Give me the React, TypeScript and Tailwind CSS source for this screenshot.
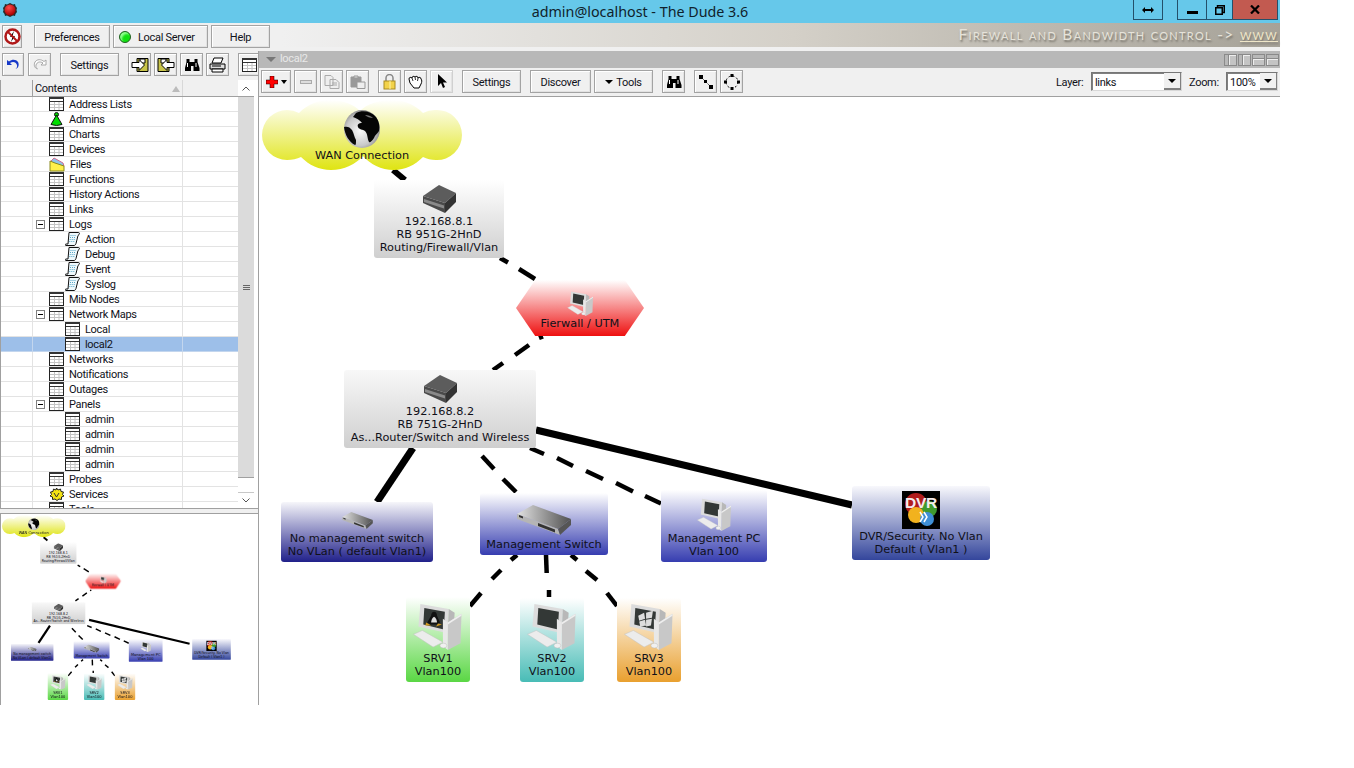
import { Fragment, type ReactNode } from 'react';

// ── Small toolbar glyphs ──────────────────────────────────────────────────────
function TableIcon({ className = '' }: { className?: string }) {
  return (
    <svg width="15" height="14" viewBox="0 0 15 14" className={`shrink-0 ${className}`}>
      <rect x="0.5" y="0.5" width="14" height="13" fill="#fff" stroke="#222" />
      <rect x="0" y="0" width="15" height="2" fill="#333" />
      <path d="M1 4.500h13" stroke="#333" />
      <path d="M1 7.500h13M1 10.500h13M5.500 5v8M10 5v8" stroke="#c4c4c4" />
    </svg>
  );
}

function ScrollIcon() {
  return (
    <svg width="15" height="14" viewBox="0 0 15 14" className="shrink-0">
      <path d="M4 .5h9.500c1 0 1.200 1 .6 2l-1.100 1-2 8c-.3 1-1 2-2 2H1c-1 0-1-1.500 0-1.500h2z" fill="#eef8fc" stroke="#111" />
      <path d="M5.500 3.500h6M5 5.500h6M4.700 7.500h6M4.300 9.500h5" stroke="#5aa8c8" strokeDasharray="1 1" />
    </svg>
  );
}

function ConeIcon() {
  return (
    <svg width="15" height="14" viewBox="0 0 15 14" className="shrink-0">
      <circle cx="7.500" cy="2.500" r="2" fill="#0c0" stroke="#111" />
      <path d="M7.500 3 L13 12.500 Q7.500 14.500 2 12.500z" fill="#0d0" stroke="#111" />
    </svg>
  );
}

function FolderIcon() {
  return (
    <svg width="16" height="15" viewBox="0 0 16 15" className="shrink-0">
      <path d="M1 5 L5 1 L14 6 L15 9 L6 8z" fill="#8fc4e8" stroke="#d06a90" />
      <path d="M1 4 L6 6 L15 9 V14 H1z" fill="#fff04a" stroke="#8a8a20" />
    </svg>
  );
}

function StarIcon() {
  return (
    <svg width="15" height="13" viewBox="0 0 15 13" className="shrink-0">
      <path d="M7.500 0l1.500 2 2.500-1 .5 2.500 2.500.5-1 2.500 1.500 1.500-2.500 1 0 2.500-2.500-.5-2 1.500-2-1.500-2.500.5 0-2.500-2.500-1 1.500-1.500-1-2.500 2.500-.5.500-2.500 2.500 1z" fill="#f5e414" stroke="#222" />
      <path d="M5 5l2.500 4L10 5" fill="none" stroke="#333" />
    </svg>
  );
}

function Binoculars() {
  return (
    <svg width="16" height="14" viewBox="0 0 16 14">
      <path d="M2.500 1h3v3h5V1h3v3l2 6v3h-6V8H7v5H1v-3l1.500-6z" fill="#000" />
      <path d="M3.500 5v4M12 5v4" stroke="#fff" />
    </svg>
  );
}

function Printer() {
  return (
    <svg width="17" height="16" viewBox="0 0 17 16">
      <path d="M5 1h9l-2 5H3z" fill="#fff" stroke="#000" />
      <path d="M1 7h15v5H1z" fill="#ddd" stroke="#000" />
      <path d="M3 12h11v3H3z" fill="#fff" stroke="#000" />
      <path d="M3 9h9" stroke="#000" />
    </svg>
  );
}

function ArrowDoc({ flip = false }: { flip?: boolean }) {
  return (
    <svg width="18" height="14" viewBox="0 0 18 14" className={flip ? '-scale-x-100' : ''}>
      <path d="M6 0.500h11v13H6z" fill="#c8c44a" stroke="#000" />
      <path d="M9 1v4h5V1z" fill="#fff" stroke="#000" />
      <path d="M1 4.500h7V1.500l5.500 5.500L8 12.500V9.500H1z" fill="#fff" stroke="#000" />
    </svg>
  );
}

function Btn({ className = '', children }: { className?: string; children?: ReactNode }) {
  return (
    <div className={`flex h-[23px] shrink-0 items-center justify-center border border-[#a3a3a3] bg-[#f0f0f0] shadow-[inset_1px_1px_0_#fff,inset_-1px_-1px_0_#e2e2e2] ${className}`}>
      {children}
    </div>
  );
}

function SplitIcon({ vertical }: { vertical: boolean }) {
  return (
    <div className={`flex h-[12px] w-[13px] gap-px border border-[#8a8a8a] bg-[#8a8a8a] ${vertical ? 'flex-row' : 'flex-col'}`}>
      <div className={`${vertical ? 'w-[3px]' : 'h-[3px]'} bg-[#b8b8b8]`} />
      <div className="flex-1 bg-[#c4c4c4] shadow-[inset_1px_1px_0_#eee]" />
    </div>
  );
}

function Dropdown({ value, className }: { value: string; className: string }) {
  return (
    <div className={`flex h-[19px] items-stretch border border-[#767676] border-b-[#d8d8d8] border-r-[#d8d8d8] bg-white shadow-[inset_1px_1px_0_#808080] ${className}`}>
      <span className="flex-1 pl-[3px] leading-[19px]">{value}</span>
      <div className="flex w-[17px] items-center justify-center border-b-2 border-r border-[#808080] bg-[#f0f0f0]">
        <div className="h-0 w-0 border-x-[4px] border-t-[4px] border-x-transparent border-t-black" />
      </div>
    </div>
  );
}

// ── Tree ──────────────────────────────────────────────────────────────────────
type Row = { label: string; level: 1 | 2; icon?: 'cone' | 'folder' | 'scroll' | 'star'; open?: boolean; selected?: boolean };

const ROWS: Row[] = [
  { label: 'Address Lists', level: 1 },
  { label: 'Admins', level: 1, icon: 'cone' },
  { label: 'Charts', level: 1 },
  { label: 'Devices', level: 1 },
  { label: 'Files', level: 1, icon: 'folder' },
  { label: 'Functions', level: 1 },
  { label: 'History Actions', level: 1 },
  { label: 'Links', level: 1 },
  { label: 'Logs', level: 1, open: true },
  { label: 'Action', level: 2, icon: 'scroll' },
  { label: 'Debug', level: 2, icon: 'scroll' },
  { label: 'Event', level: 2, icon: 'scroll' },
  { label: 'Syslog', level: 2, icon: 'scroll' },
  { label: 'Mib Nodes', level: 1 },
  { label: 'Network Maps', level: 1, open: true },
  { label: 'Local', level: 2 },
  { label: 'local2', level: 2, selected: true },
  { label: 'Networks', level: 1 },
  { label: 'Notifications', level: 1 },
  { label: 'Outages', level: 1 },
  { label: 'Panels', level: 1, open: true },
  { label: 'admin', level: 2 },
  { label: 'admin', level: 2 },
  { label: 'admin', level: 2 },
  { label: 'admin', level: 2 },
  { label: 'Probes', level: 1 },
  { label: 'Services', level: 1, icon: 'star' },
  { label: 'Tools', level: 1 },
];

function TreeIcon({ icon }: { icon?: Row['icon'] }) {
  if (icon === 'cone') return <ConeIcon />;
  if (icon === 'folder') return <FolderIcon />;
  if (icon === 'scroll') return <ScrollIcon />;
  if (icon === 'star') return <StarIcon />;
  return <TableIcon />;
}

function TreeRow({ row }: { row: Row }) {
  const line = row.selected ? 'border-[#c3d6ee] bg-[#9dbfe9]' : 'border-[#e3e3e3]';
  return (
    <div className={`flex h-[15px] shrink-0 border-b ${line}`}>
      <div className={`w-[32px] border-r ${line}`} />
      <div className={`flex w-[150px] items-center border-r ${line}`}>
        <div className={`flex shrink-0 items-center ${row.level === 1 ? 'w-[16px]' : 'w-[32px]'}`}>
          {row.open && (
            <div className="ml-[3px] flex h-[9px] w-[9px] items-center justify-center border border-[#808080] bg-white">
              <div className="h-px w-[5px] bg-black" />
            </div>
          )}
        </div>
        <TreeIcon icon={row.icon} />
        <span className="ml-[5px] whitespace-nowrap pt-[2px] leading-[14px] text-[#10121a]">{row.label}</span>
      </div>
    </div>
  );
}

// ── Map pictures ──────────────────────────────────────────────────────────────
function RouterBox() {
  return (
    <svg width="33" height="28" viewBox="0 0 33 28" className="shrink-0">
      <path d="M0 11L16 0l17 8-11 10z" fill="#5c5c5c" />
      <path d="M0 11l22 7v10L0 18z" fill="#4a4a4a" />
      <path d="M1 14l20 6.500v3L1 17z" fill="#8a8a8a" />
      <path d="M22 18l11-10v9L22 28z" fill="#333" />
    </svg>
  );
}

function Rack({ className }: { className: string }) {
  return (
    <svg viewBox="0 0 54 30" className={`shrink-0 ${className}`}>
      <defs>
        <linearGradient id="rackTop" x1="0" x2="1" y1="0" y2="0">
          <stop offset="0" stopColor="#e2e2e2" />
          <stop offset="1" stopColor="#505050" />
        </linearGradient>
      </defs>
      <path d="M0 9L16 0l38 14-13 10z" fill="url(#rackTop)" />
      <path d="M0 9l41 15 2 6L0 14z" fill="#b5b5b5" />
      <path d="M21 18l17 6.500v3L21 21zM2 10l4 1.500v2L2 12z" fill="#333" />
      <path d="M41 24l13-10v6L43 30z" fill="#555" />
    </svg>
  );
}

function Computer({ className, screen }: { className: string; screen?: 'linux' | 'windows' }) {
  return (
    <svg viewBox="0 0 50 48" className={`shrink-0 ${className}`}>
      <path d="M7 1l29 5-1 25L5 24z" fill="#dcdcdc" />
      <path d="M36 6l6 4-1 16-6 5z" fill="#b8b8b8" />
      <path d="M11 5l21 4-1 18-21-5z" fill="#333836" />
      {screen === 'linux' && (
        <Fragment>
          <path d="M21 9c2 0 3 2 3 4l3 7-3 2h-7l-3-2 4-7c0-2 1-4 3-4z" fill="#111" />
          <path d="M21 14c2 1 3 4 3 6h-6c0-2 1-5 3-6z" fill="#ddd" />
          <path d="M13 20l5 3h-6zM25 21l4 1-6 2z" fill="#d39a1f" />
        </Fragment>
      )}
      {screen === 'windows' && (
        <path d="M14 13l6-3 1 6-6 2zM22 10l7-2-1 7-6 1zM15 19l6-2 1 6-6 1zM22 17l6-1-1 7-5 1z" fill="#ddd" />
      )}
      <path d="M35 20l14-9-1 30-13 7z" fill="#c8c8c8" />
      <path d="M35 20l14-9 0 2-14 9z" fill="#eee" />
      <path d="M30 16l5 4v28l-5-4z" fill="#e8e8e8" />
      <path d="M0 32l9-4 21 12-10 5z" fill="#ececec" stroke="#c4c4c4" strokeWidth=".5" />
      <ellipse cx="30.500" cy="43.500" rx="3.500" ry="2.500" fill="#f0f0f0" stroke="#bbb" strokeWidth=".5" />
    </svg>
  );
}

function Globe() {
  return (
    <svg width="36" height="38" viewBox="0 0 36 38" className="shrink-0">
      <defs>
        <radialGradient id="globeShade" cx="0.450" cy="0.550" r="0.650">
          <stop offset="0" stopColor="#fafafa" />
          <stop offset="0.600" stopColor="#c8c8c8" />
          <stop offset="1" stopColor="#6a6a6a" />
        </radialGradient>
      </defs>
      <ellipse cx="18" cy="19" rx="18" ry="19" fill="url(#globeShade)" />
      <path d="M12 3C18 0 27 1 32 7c3 4 4 9 3 14-2 3-4 4-5 7-2 3-4 5-5 4-2-4-1-8-4-11-2-2-6-1-7-4-1-3 1-4 4-4-2-3-6-5-9-6z" fill="#050505" />
      <path d="M21 5c3 0 6 1 8 3-3 0-6-1-8-3z" fill="#777" />
      <path d="M0 17c3-1 6 0 8 3 2 3 2 7 4 10 0 3 0 5-1 5C5 32 1 25 0 17z" fill="#0a0a0a" />
    </svg>
  );
}

function Cloud() {
  return (
    <svg width="200" height="70" viewBox="0 0 200 70" className="absolute left-0 top-0">
      <defs>
        <linearGradient id="cloudFill" gradientUnits="userSpaceOnUse" x1="0" x2="0" y1="0" y2="70">
          <stop offset="0" stopColor="#ffffff" />
          <stop offset="1" stopColor="#dfe412" />
        </linearGradient>
      </defs>
      <path
        d="M25 10a25 25 0 0 1 12 3C46 4 56 0 68 0c13 0 23 4 30 11C105 4 116 0 130 0c12 0 22 4 31 13a25 25 0 0 1 13-3 25 25 0 0 1 26 25 25 25 0 0 1-26 25c-5 0-9-1-13-3-8 8-18 13-29 13-13 0-24-6-31-14-7 8-19 14-32 14-12 0-22-5-30-13-4 2-9 3-14 3A25 25 0 0 1 0 35a25 25 0 0 1 25-25z"
        fill="url(#cloudFill)"
      />
    </svg>
  );
}

function DvrLogo() {
  return (
    <svg width="38" height="38" viewBox="0 0 38 38" className="shrink-0">
      <rect width="38" height="38" fill="#000" />
      <circle cx="14" cy="13" r="11" fill="#b11c1c" />
      <circle cx="27" cy="18" r="8" fill="#3f9a2e" />
      <circle cx="14" cy="24" r="8" fill="#f2b21e" />
      <circle cx="25" cy="28" r="7" fill="#3f8fd6" />
      <text x="19" y="17" textAnchor="middle" fontFamily="Liberation Sans, sans-serif" fontWeight="700" fontSize="15.500" fill="#f4ecec">DVR</text>
      <path d="M18 21l3 5-3 5M22 21l3 5-3 5" fill="none" stroke="#fff" strokeWidth="1.500" />
    </svg>
  );
}

// Link pieces in screen coordinates, only the parts that are not hidden by a node
const THICK = [
  [393, 170, 405, 180, 6],
  [413, 448, 377, 502, 7],
  [536, 430, 852, 505, 7],
];
const DASHES = [
  [500, 258, 508, 262.500], [519, 269, 535, 279], [539, 338, 543, 336.500],
  [515, 355, 529, 345], [493, 370, 503, 363],
  [482, 456, 494, 469], [503, 479, 516, 492],
  [530, 448, 544, 454], [557, 458, 573, 466], [586, 471, 603, 479], [616, 483, 633, 491.500], [645, 496, 661, 503.500],
  [511, 560, 517, 555], [492, 579, 501, 570], [470, 606, 481, 593],
  [546, 555, 546.700, 573], [549, 590, 549, 597],
  [571, 555, 577, 560], [586, 571, 597, 580], [607, 593, 617, 606],
];

function Label({ lines }: { lines: string[] }) {
  return (
    <div className="text-center font-['DejaVu_Sans',sans-serif] text-[11.300px] leading-[13px] tracking-normal whitespace-nowrap text-[#101018]">
      {lines.map((l) => <div key={l}>{l}</div>)}
    </div>
  );
}

const nodeBase = 'absolute flex flex-col items-center justify-end rounded-[3px] pb-[4px]';

function NetworkMap({ mini = false }: { mini?: boolean }) {
  // the overview draws its boxes a little tighter than the map scale
  const tight = mini ? 'scale-[0.88]' : '';
  return (
    <div className="relative h-[608px] w-[1021px]">
      <svg viewBox="259 97 1021 608" className="absolute inset-0 h-full w-full">
        {THICK.map(([a, b, c, d, w]) => (
          <line key={`${a}-${b}`} x1={a} y1={b} x2={c} y2={d} stroke="#000" strokeWidth={w} />
        ))}
        {DASHES.map(([a, b, c, d]) => (
          <line key={`${a}-${b}`} x1={a} y1={b} x2={c} y2={d} stroke="#000" strokeWidth={4.500} />
        ))}
      </svg>

      <div className="absolute left-[3px] top-[3px] h-[70px] w-[200px]">
        <Cloud />
        <div className="relative flex flex-col items-center pt-[10px]">
          <div className="mb-[1px]"><Globe /></div>
          <Label lines={['WAN Connection']} />
        </div>
      </div>

      <div className={`${nodeBase} ${tight} left-[115px] top-[83px] h-[78px] w-[130px] bg-linear-to-b/srgb from-white to-[#cfcfcf]`}>
        <div className="mb-[2px]"><RouterBox /></div>
        <Label lines={['192.168.8.1', 'RB 951G-2HnD', 'Routing/Firewall/Vlan']} />
      </div>

      <div className={`${nodeBase} ${tight} left-[257px] top-[183px] h-[56px] w-[128px] rounded-none bg-linear-to-b/srgb from-white to-[#ee1010] [clip-path:polygon(0_50%,15%_0,85%_0,100%_50%,85%_100%,15%_100%)]`}>
        <Computer className="mb-[1px] h-[25px] w-[27px]" />
        <div className="pb-[2px]"><Label lines={['Fierwall / UTM']} /></div>
      </div>

      <div className={`${nodeBase} ${tight} left-[85px] top-[273px] h-[78px] w-[192px] bg-linear-to-b/srgb from-[#f8f8f8] to-[#cfcfcf]`}>
        <div className="mb-[2px]"><RouterBox /></div>
        <Label lines={['192.168.8.2', 'RB 751G-2HnD', 'As...Router/Switch and Wireless']} />
      </div>

      <div className={`${nodeBase} ${tight} left-[22px] top-[405px] h-[60px] w-[152px] bg-linear-to-b/srgb from-[#f6f6fa] to-[#20208a]`}>
        <Rack className="mb-[3px] h-[17px] w-[31px]" />
        <Label lines={['No management switch', 'No VLan ( default Vlan1)']} />
      </div>

      <div className={`${nodeBase} ${tight} left-[221px] top-[396px] h-[62px] w-[128px] bg-linear-to-b/srgb from-white to-[#363db0]`}>
        <Rack className="mb-[3px] h-[30px] w-[54px]" />
        <Label lines={['Management Switch']} />
      </div>

      <div className={`${nodeBase} left-[402px] top-[393px] h-[72px] w-[106px] bg-linear-to-b/srgb from-white to-[#363db0]`}>
        <Computer className="mb-[1px] h-[33px] w-[35px]" />
        <Label lines={['Management PC', 'Vlan 100']} />
      </div>

      <div className={`${nodeBase} ${tight} left-[593px] top-[389px] h-[74px] w-[138px] bg-linear-to-b/srgb from-[#f8f8fc] to-[#34469c]`}>
        <div className="mb-[1px]"><DvrLogo /></div>
        <Label lines={['DVR/Security. No Vlan', 'Default ( Vlan1 )']} />
      </div>

      <div className={`${nodeBase} left-[147px] top-[500px] h-[85px] w-[64px] bg-linear-to-b/srgb from-white to-[#5ad744]`}>
        <Computer className="mb-[2px] h-[47px] w-[50px]" screen="linux" />
        <Label lines={['SRV1', 'Vlan100']} />
      </div>

      <div className={`${nodeBase} left-[261px] top-[501px] h-[84px] w-[64px] bg-linear-to-b/srgb from-white to-[#48bcb6]`}>
        <Computer className="mb-[2px] h-[47px] w-[50px]" />
        <Label lines={['SRV2', 'Vlan100']} />
      </div>

      <div className={`${nodeBase} left-[358px] top-[501px] h-[84px] w-[64px] bg-linear-to-b/srgb from-white to-[#e9a02f]`}>
        <Computer className="mb-[2px] h-[47px] w-[50px]" screen="windows" />
        <Label lines={['SRV3', 'Vlan100']} />
      </div>
    </div>
  );
}

// ── Window ────────────────────────────────────────────────────────────────────
export default function App() {
  return (
    <div className="h-[768px] w-[1354px] overflow-hidden bg-white font-['Roboto',sans-serif] text-[11px] tracking-[-0.3px] text-[#10121a]">
      <div className="flex h-[705px] w-[1280px] flex-col bg-[#f0f0f0]">
        {/* Title bar */}
        <div className="relative flex h-[23px] shrink-0 items-center justify-center bg-[#66c8ea]">
          <svg width="16" height="16" viewBox="0 0 16 16" className="absolute left-[2px] top-[2px]">
            <defs>
              <radialGradient id="orb" cx="0.400" cy="0.300" r="0.700">
                <stop offset="0" stopColor="#ff4a4a" />
                <stop offset="1" stopColor="#a80000" />
              </radialGradient>
            </defs>
            <path d="M3 2l2 .5L8 1l3 1.500 2-.5.500 2L15 6l-.5 2 .5 2-1.500 2-.5 2-2-.5L8 15l-3-1.500-2 .5-.5-2L1 10l.5-2L1 6l1.500-2z" fill="#2a2a2a" />
            <circle cx="8" cy="8" r="5.500" fill="url(#orb)" />
          </svg>
          <span className="font-['Noto_Sans',sans-serif] text-[14.300px] tracking-normal text-[#10222c]">admin@localhost - The Dude 3.6</span>
          <div className="absolute right-[2px] top-0 flex h-[20px] items-stretch">
            <div className="mr-[14px] flex w-[30px] items-center justify-center border border-t-0 border-[#24506a] text-[#000]">
              <svg width="12" height="8" viewBox="0 0 12 8"><path d="M0 4l3-3v2h6V1l3 3-3 3V5H3v2z" fill="#000" /></svg>
            </div>
            <div className="flex w-[29px] items-end justify-center border border-t-0 border-r-0 border-[#24506a] pb-[5px]">
              <div className="h-[3px] w-[11px] bg-black" />
            </div>
            <div className="flex w-[26px] items-center justify-center border border-t-0 border-r-0 border-[#24506a]">
              <svg width="10" height="10" viewBox="0 0 10 10"><path d="M2.500 2.500V.75h6.750v6.750H7.500M.75 2.750h6.500v6.500H.75z" fill="none" stroke="#000" strokeWidth="1.500" /></svg>
            </div>
            <div className="flex w-[46px] items-center justify-center border border-t-0 border-[#24506a] bg-[#c25a50]">
              <svg width="10" height="9" viewBox="0 0 10 9"><path d="M1 .5l8 8M9 .5l-8 8" stroke="#000" strokeWidth="2.200" /></svg>
            </div>
          </div>
        </div>

        {/* Main buttons and banner */}
        <div className="flex h-[24px] shrink-0 items-start justify-between bg-linear-to-r/srgb from-[#f0f0f0] from-[22%] via-[#d4d0c8] via-[62%] to-[#a6a298] pt-[2px]">
          <div className="flex">
            <Btn className="ml-[2px] w-[20px]">
              <svg width="17" height="17" viewBox="0 0 17 17">
                <circle cx="8.500" cy="8.500" r="7" fill="#fff" stroke="#b01818" strokeWidth="2.500" />
                <path d="M10 3L6 9h2.500L7 14l4-6H8.500z" fill="#000" />
                <path d="M3.500 3.500l10 10" stroke="#b01818" strokeWidth="2" />
              </svg>
            </Btn>
            <Btn className="ml-[12px] w-[76px] pt-[3px]">Preferences</Btn>
            <Btn className="ml-[3px] w-[95px] justify-start pl-[5px]">
              <span className="h-[12px] w-[12px] rounded-full border border-[#246024] bg-[#10e010] shadow-[inset_2px_2px_2px_#8fff8f]" />
              <span className="ml-[7px] pt-[3px]">Local Server</span>
            </Btn>
            <Btn className="ml-[3px] w-[59px] pt-[3px]">Help</Btn>
          </div>
          <div className="-mt-[1px] whitespace-nowrap pr-[2px] font-['Lato',sans-serif] text-[15.500px] leading-[20px] tracking-[1.300px] text-[#e6e3da] [font-variant-caps:small-caps] [text-shadow:1px_2px_2px_#77736a]">
            Firewall and Bandwidth control -&gt; <span className="underline text-[#efe6c8]">www</span>
          </div>
        </div>

        <div className="flex min-h-0 flex-1 pt-[4px]">
          {/* Left side */}
          <div className="flex w-[258px] shrink-0 flex-col">
            <div className="flex h-[29px] shrink-0 items-start overflow-hidden pt-[2px]">
              <Btn className="ml-[2px] w-[22px]">
                <svg width="14" height="12" viewBox="0 0 14 12"><path d="M1 1v5h5L4 4c3-2 6-1 7 2 .5 2-.5 3-1.500 4 3-1 4-4 2.500-7C10 0 6 0 3 2.500z" fill="#1638c8" /></svg>
              </Btn>
              <Btn className="ml-[4px] w-[23px]">
                <svg width="14" height="12" viewBox="0 0 14 12" className="-scale-x-100"><path d="M1 1v5h5L4 4c3-2 6-1 7 2 .5 2-.5 3-1.500 4 3-1 4-4 2.500-7C10 0 6 0 3 2.500z" fill="#fff" stroke="#a8a8a8" /></svg>
              </Btn>
              <Btn className="ml-[9px] w-[59px] pt-[3px]">Settings</Btn>
              <Btn className="ml-[9px] w-[23px]"><ArrowDoc /></Btn>
              <Btn className="ml-[3px] w-[23px]"><ArrowDoc flip /></Btn>
              <Btn className="ml-[3px] w-[23px]"><Binoculars /></Btn>
              <Btn className="ml-[3px] w-[23px]"><Printer /></Btn>
              <Btn className="ml-[9px] w-[23px]"><TableIcon /></Btn>
            </div>

            {/* Tree */}
            <div className="flex h-[429px] shrink-0 overflow-hidden border-b border-l border-[#a0a0a0] bg-white">
              <div className="flex w-[237px] shrink-0 flex-col overflow-hidden">
                <div className="flex h-[17px] shrink-0 border-b border-[#a0a0a0] bg-[#f0f0f0]">
                  <div className="w-[32px] border-r border-[#a0a0a0]" />
                  <div className="flex w-[150px] items-center justify-between border-r border-[#d8d8d8] pl-[2px] pr-[2px] pt-[2px] leading-[14px]">
                    Contents
                    <div className="h-0 w-0 border-x-[4px] border-b-[6px] border-x-transparent border-b-[#bcbcbc]" />
                  </div>
                </div>
                {ROWS.map((row, i) => <TreeRow key={`${row.label}${i}`} row={row} />)}
              </div>
              <div className="flex w-[16px] shrink-0 flex-col bg-white">
                <div className="flex h-[17px] shrink-0 items-center justify-center border-b border-[#a0a0a0]">
                  <svg width="8" height="5" viewBox="0 0 8 5"><path d="M.5 4.500L4 1l3.500 3.500" fill="none" stroke="#555" /></svg>
                </div>
                <div className="flex h-[381px] shrink-0 flex-col items-center justify-center gap-px border-b border-[#a0a0a0] bg-[#dbdbdb]">
                  <div className="h-px w-[7px] bg-[#666]" />
                  <div className="h-px w-[7px] bg-[#666]" />
                  <div className="h-px w-[7px] bg-[#666]" />
                </div>
                <div className="flex-1" />
                <div className="flex h-[16px] shrink-0 items-center justify-center border-t border-[#c8c8c8]">
                  <svg width="8" height="5" viewBox="0 0 8 5"><path d="M.5.500L4 4 7.500.500" fill="none" stroke="#555" /></svg>
                </div>
              </div>
            </div>

            {/* Overview of the map */}
            <div className="mt-[4px] min-h-0 flex-1 overflow-hidden border-l border-t border-[#a0a0a0] bg-white">
              <div className="origin-top-left scale-[0.318] blur-[0.700px]">
                <NetworkMap mini />
              </div>
            </div>
          </div>

          {/* Map window */}
          <div className="flex min-w-0 flex-1 flex-col border-l border-[#a0a0a0]">
            <div className="flex h-[17px] shrink-0 items-center bg-[#b8b8b8] pl-[7px] pr-px">
              <div className="h-0 w-0 border-x-[5px] border-t-[5px] border-x-transparent border-t-[#777]" />
              <span className="ml-[4px] text-[#e8e8e8]">local2</span>
              <div className="ml-auto flex gap-px">
                <SplitIcon vertical />
                <SplitIcon vertical />
                <SplitIcon vertical={false} />
                <SplitIcon vertical={false} />
              </div>
            </div>
            <div className="flex h-[29px] shrink-0 items-start border-b border-[#a0a0a0] pt-[2px]">
              <Btn className="ml-[2px] w-[30px] gap-[3px]">
                <svg width="12" height="12" viewBox="0 0 12 12"><path d="M4 0h4v4h4v4H8v4H4V8H0V4h4z" fill="#f00" stroke="#000" strokeWidth=".5" /></svg>
                <div className="h-0 w-0 border-x-[3.500px] border-t-[4px] border-x-transparent border-t-black" />
              </Btn>
              <Btn className="ml-[3px] w-[23px]"><div className="h-[4px] w-[12px] border border-[#aaa] bg-[#ddd]" /></Btn>
              <Btn className="ml-[3px] w-[23px]">
                <svg width="16" height="14" viewBox="0 0 16 14"><path d="M1 .5h6l2 2v8H1zM6 4.500h6l3 3v6H6z" fill="#eee" stroke="#aaa" /><path d="M8 8h5M8 10h5" stroke="#aaa" /></svg>
              </Btn>
              <Btn className="ml-[3px] w-[23px]">
                <svg width="16" height="14" viewBox="0 0 16 14"><path d="M1 2h10v10H1z" fill="#999" stroke="#999" /><path d="M4 1h4v2H4z" fill="#ddd" stroke="#999" /><path d="M7 7h8v6.500H7z" fill="#eee" stroke="#999" /></svg>
              </Btn>
              <Btn className="ml-[9px] w-[23px]">
                <svg width="13" height="16" viewBox="0 0 13 16"><path d="M3 7V4a3.500 3.500 0 0 1 7 0v3" fill="none" stroke="#888" strokeWidth="1.500" /><rect x="1" y="7" width="11" height="8" fill="#f2d24a" stroke="#a88a20" /><path d="M7 7v8" stroke="#fff4a8" /></svg>
              </Btn>
              <Btn className="ml-[3px] w-[23px]">
                <svg width="15" height="14" viewBox="0 0 15 14"><path d="M1 4c0-2 2-2 3-1 0-2 2-2 3-1 1-1 3-1 3 1 1-1 3-1 3 1 1 1 1 3 0 5l-2 4H6L2 8 1 4z" fill="#fff" stroke="#000" /><path d="M4 3l1 3M7 2l.5 3M10 3l-.5 3" stroke="#000" strokeWidth=".8" /></svg>
              </Btn>
              <Btn className="ml-[3px] w-[23px] border-[#d0d0d0]">
                <svg width="10" height="15" viewBox="0 0 10 15"><path d="M1 0v12l3-3 2 5 2-1-2-4.500h4z" fill="#000" /></svg>
              </Btn>
              <Btn className="ml-[9px] w-[59px] pt-[3px]">Settings</Btn>
              <Btn className="ml-[9px] w-[61px] pt-[3px]">Discover</Btn>
              <Btn className="ml-[3px] w-[59px] gap-[3px]">
                <div className="h-0 w-0 border-x-[4px] border-t-[4px] border-x-transparent border-t-black" />
                <span className="pt-[3px]">Tools</span>
              </Btn>
              <Btn className="ml-[9px] w-[23px]"><Binoculars /></Btn>
              <Btn className="ml-[9px] w-[23px]">
                <svg width="14" height="14" viewBox="0 0 14 14"><path d="M2 2l10 10" stroke="#000" strokeDasharray="2 1.500" /><path d="M0 0h4v4H0zM5 5h3v3H5zM10 10h4v4h-4z" fill="#000" /></svg>
              </Btn>
              <Btn className="ml-[3px] w-[23px]">
                <svg width="16" height="16" viewBox="0 0 16 16"><circle cx="8" cy="8" r="6" fill="none" stroke="#000" strokeDasharray="2 2" /><path d="M6.500 0h3v3h-3zM0 6.500h3v3H0zM13 6.500h3v3h-3zM6.500 13h3v3h-3z" fill="#000" /></svg>
              </Btn>
              <div className="ml-auto flex h-[23px] items-center pr-[2px]">
                <span className="w-[29px] pt-[3px]">Layer:</span>
                <Dropdown value="links" className="ml-[6px] w-[91px]" />
                <span className="ml-[7px] w-[30px] pt-[3px]">Zoom:</span>
                <Dropdown value="100%" className="ml-[7px] w-[52px]" />
              </div>
            </div>
            <div className="min-h-0 flex-1 overflow-hidden bg-white">
              <NetworkMap />
            </div>
          </div>
        </div>
      </div>
    </div>
  );
}
